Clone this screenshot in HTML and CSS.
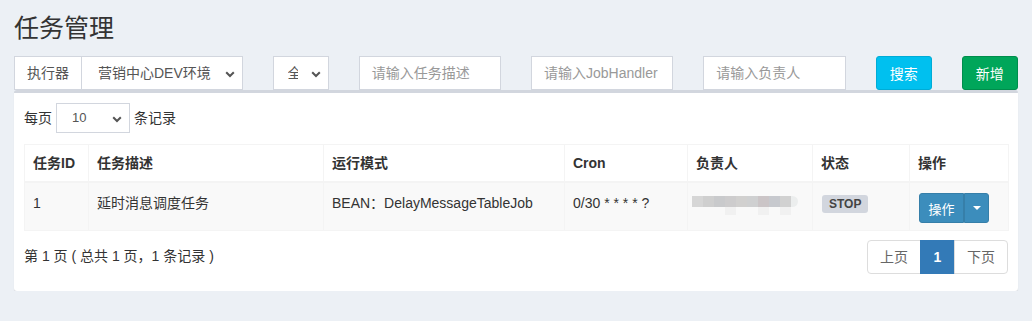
FILE: index.html
```html
<!DOCTYPE html>
<html lang="zh-CN">
<head>
<meta charset="utf-8">
<title>任务管理</title>
<link rel="stylesheet" href="styles.css">
</head>
<body>
<div class="page">
  <h1 class="title">任务管理</h1>
  <div class="filters">
    <div class="input-group span3">
      <span class="addon">执行器</span>
      <div class="select sel-main">
        <span class="sel-text">营销中心DEV环境</span>
        <svg class="chev" width="10" height="7" viewBox="0 0 10 7"><polyline points="1.2,1.2 5,5 8.8,1.2" fill="none" stroke="#555" stroke-width="2"/></svg>
      </div>
    </div>
    <div class="select span1 sel-status">
      <span class="sel-clip"><span class="sel-text">全部</span></span>
      <svg class="chev" width="10" height="7" viewBox="0 0 10 7"><polyline points="1.2,1.2 5,5 8.8,1.2" fill="none" stroke="#555" stroke-width="2"/></svg>
    </div>
    <div class="input span2"><span class="ph">请输入任务描述</span></div>
    <div class="input span2"><span class="ph">请输入JobHandler</span></div>
    <div class="input span2"><span class="ph">请输入负责人</span></div>
    <div class="span1"><button class="btn btn-info">搜索</button></div>
    <div class="span1"><button class="btn btn-success">新增</button></div>
  </div>

  <div class="box">
    <div class="length-row">
      <span>每页</span>
      <div class="select sel-sm">
        <span class="sel-text">10</span>
        <svg class="chev" width="10" height="7" viewBox="0 0 10 7"><polyline points="1.2,1.2 5,5 8.8,1.2" fill="none" stroke="#555" stroke-width="2"/></svg>
      </div>
      <span>条记录</span>
    </div>

    <table class="grid">
      <colgroup>
        <col class="c1"><col class="c2"><col class="c3"><col class="c4"><col class="c5"><col class="c6"><col class="c7">
      </colgroup>
      <thead>
        <tr><th>任务ID</th><th>任务描述</th><th>运行模式</th><th>Cron</th><th>负责人</th><th>状态</th><th>操作</th></tr>
      </thead>
      <tbody>
        <tr>
          <td>1</td>
          <td>延时消息调度任务</td>
          <td>BEAN：DelayMessageTableJob</td>
          <td>0/30 * * * * ?</td>
          <td>
            <div class="mosaic">
              <div class="mrow">
                <i class="m1"></i><i class="m2"></i><i class="m3"></i><i class="m4"></i><i class="m5"></i><i class="m6"></i><i class="m7"></i><i class="m8"></i><i class="m9"></i><i class="m10"></i>
              </div>
              <div class="mrow faint">
                <i class="f0"></i><i class="f0"></i><i class="f0"></i><i class="f1"></i><i class="f0"></i><i class="f0"></i><i class="f1"></i><i class="f0"></i><i class="f1"></i><i class="f0"></i>
              </div>
            </div>
          </td>
          <td><span class="label">STOP</span></td>
          <td>
            <div class="btn-group">
              <button class="btn btn-primary btn-sm">操作</button><button class="btn btn-primary btn-sm caret-btn"><span class="caret"></span></button>
            </div>
          </td>
        </tr>
      </tbody>
    </table>

    <div class="foot-row">
      <div class="info">第 1 页 ( 总共 1 页，1 条记录 )</div>
      <ul class="pagination">
        <li><a>上页</a></li>
        <li class="active"><a>1</a></li>
        <li><a>下页</a></li>
      </ul>
    </div>
  </div>
</div>
</body>
</html>
```

FILE: styles.css
```css
* { box-sizing: border-box; }
html, body { margin: 0; padding: 0; }
body {
  background: #ecf0f5;
  font-family: "Liberation Sans", "Noto Sans CJK SC", sans-serif;
  font-size: 14px;
  color: #333;
  line-height: 20px;
}
.page { padding: 13px 14px 0 14px; width: 1032px; }
.title {
  margin: 0;
  font-size: 25px;
  font-weight: 400;
  line-height: 30px;
  color: #333;
}
.filters {
  margin-top: 13px;
  display: grid;
  grid-template-columns: repeat(12, 1fr);
  column-gap: 30px;
  height: 34px;
}
.span3 { grid-column: span 3; }
.span2 { grid-column: span 2; }
.span1 { grid-column: span 1; }

.input-group { display: flex; height: 34px; }
.addon {
  flex: 0 0 68px;
  border: 1px solid #d2d6de;
  background: #fff;
  display: flex; align-items: center; justify-content: center;
  color: #555;
}
.select {
  position: relative;
  background: #fff;
  border: 1px solid #d2d6de;
  display: flex; align-items: center;
  height: 34px;
  color: #555;
}
.sel-main { flex: 1; border-left: 0; padding-left: 16px; }
.chev { position: absolute; right: 7px; top: 14px; }
.sel-status { padding-left: 14px; }
.sel-clip { display: block; width: 10px; overflow: hidden; white-space: nowrap; }
.input {
  height: 34px;
  background: #fff;
  border: 1px solid #d2d6de;
  padding: 0 12px;
  display: flex; align-items: center;
}
.ph { color: #999; white-space: nowrap; }
.btn {
  font-family: inherit;
  font-size: 14px;
  border: 1px solid transparent;
  border-radius: 3px;
  color: #fff;
  cursor: pointer;
  padding: 0;
}
.filters .btn { width: 56px; height: 34px; }
.btn-info { background: #00c0ef; border-color: #00acd6; }
.btn-success { background: #00a65a; border-color: #008d4c; }

.box {
  margin-top: 0;
  background: #fff;
  border-top: 3px solid #d2d6de;
  border-radius: 3px;
  box-shadow: 0 1px 1px rgba(0,0,0,.1);
  padding: 10px 10px 17px 10px;
}
.length-row { display: flex; align-items: center; height: 30px; gap: 4px; }
.sel-sm { width: 74px; height: 30px; padding-left: 15px; color: #555; font-size: 13px; }
.sel-sm .chev { top: 12px; right: 7px; }

.grid {
  margin-top: 11px;
  width: 984px;
  border-collapse: collapse;
  table-layout: fixed;
  border: 1px solid #f4f4f4;
}
.c1 { width: 64px; } .c2 { width: 235px; } .c3 { width: 241px; } .c4 { width: 123px; }
.c5 { width: 125px; } .c6 { width: 97px; } .c7 { width: 99px; }
.grid th, .grid td {
  border: 1px solid #f4f4f4;
  text-align: left;
  vertical-align: top;
}
.grid th {
  padding: 8px 8px;
  font-weight: 700;
  color: #333;
  border-bottom-width: 2px;
}
.grid td { padding: 10px 8px 7px 8px; background: #f9f9f9; color: #333; }
.mosaic { padding-top: 3px; margin-left: -4px; }
.mrow { display: flex; height: 11px; }
.mrow i { width: 11px; height: 11px; display: block; }
.m1 { background: #d6d6d6; } .m2 { background: #cfcfcf; } .m3 { background: #c9cacc; } .m4 { background: #cdcccd; }
.m5 { background: #d1d0cf; } .m6 { background: #cfd0d1; } .m7 { background: #cbc5c7; } .m8 { background: #c7c9ce; }
.m9 { background: #d1d1d1; } .m10 { background: #eceeee; width: 7px !important; border-radius: 0 6px 6px 0; }
.mrow.faint i { height: 8px; }
.f0 { background: transparent; } .f1 { background: #f1f1f1; }

.label {
  display: inline-block;
  background: #d2d6de;
  color: #444;
  font-weight: 700;
  font-size: 12px;
  line-height: 12px;
  padding: 3px 7px 3px 7px;
  border-radius: 3px;
  margin-top: 1px;
  margin-left: 1px;
}
.btn-group { display: flex; margin-left: 1px; }
.btn-primary { background: #3c8dbc; border-color: #367fa9; }
.btn-sm { height: 30px; font-size: 13px; }
.btn-group .btn:first-child { width: 45px; border-radius: 3px 0 0 3px; }
.btn-group .caret-btn { width: 25px; border-radius: 0 3px 3px 0; border-left-color: #367fa9; display: flex; align-items: center; justify-content: center; }
.caret {
  width: 0; height: 0;
  border-top: 4px solid #fff;
  border-left: 4px solid transparent;
  border-right: 4px solid transparent;
}

.foot-row { display: flex; justify-content: space-between; align-items: flex-start; margin-top: 9px; }
.info { padding-top: 6px; color: #333; }
.pagination { display: flex; list-style: none; margin: 0; padding: 0; }
.pagination li a {
  display: block;
  height: 34px;
  line-height: 20px;
  padding: 6px 0;
  text-align: center;
  white-space: nowrap;
  border: 1px solid #ddd;
  margin-left: -1px;
  background: #fff;
  color: #666;
}
.pagination li:first-child a { border-radius: 4px 0 0 4px; margin-left: 0; width: 54px; }
.pagination li:last-child a { border-radius: 0 4px 4px 0; width: 54px; }
.pagination li.active a { background: #337ab7; border-color: #337ab7; color: #fff; width: 35px; font-weight: 700; }
```
